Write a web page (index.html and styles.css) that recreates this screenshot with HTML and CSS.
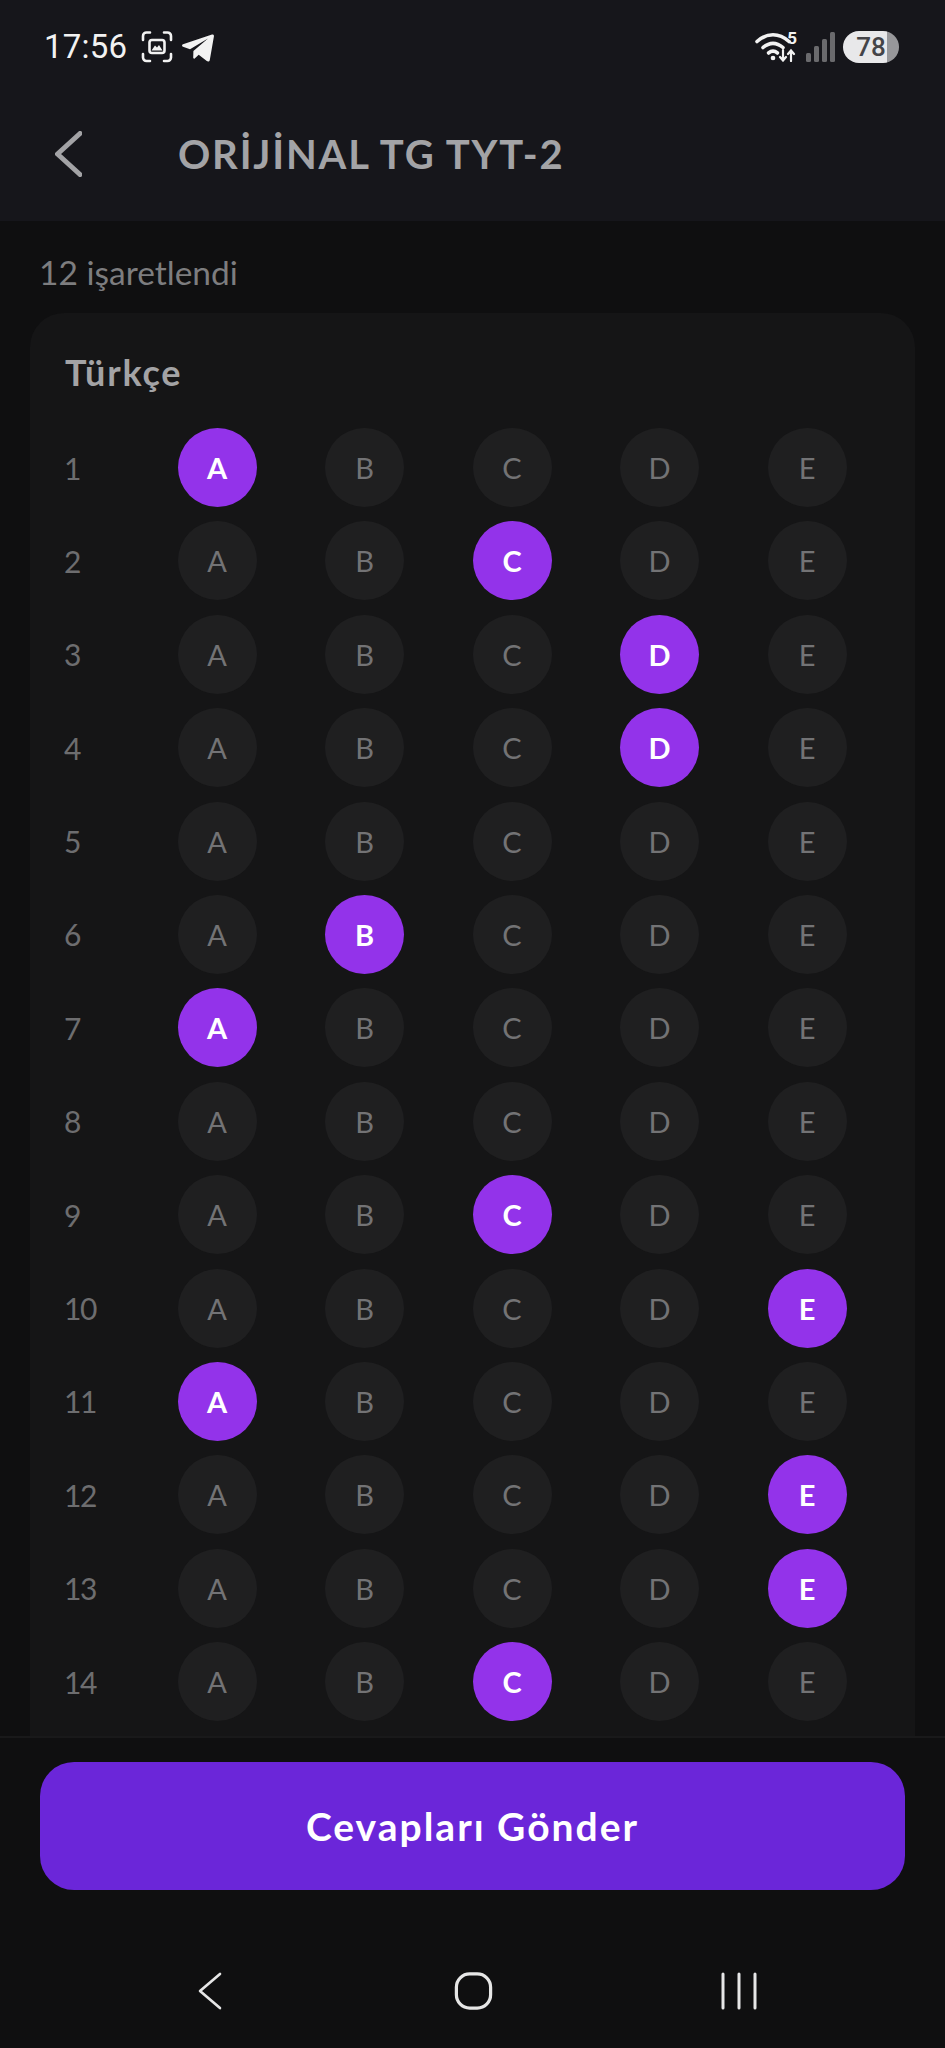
FILE: index.html
```html
<!DOCTYPE html>
<html lang="tr">
<head>
<meta charset="utf-8">
<title>ORİJİNAL TG TYT-2</title>
<link rel="stylesheet" href="styles.css">
</head>
<body>
<div class="screen">
  <div class="topbar">
    <div class="status">
      <div class="status-left">
        <span class="time">17:56</span>
        <svg class="ic-shot" viewBox="0 0 32 32" fill="none" stroke="#f2f2f2" stroke-width="2.6" stroke-linecap="round"><path d="M2 9V5a3.500 3.500 0 0 1 3.500-3.500H9M23 1.500h3.500A3.500 3.500 0 0 1 30 5v4M30 23v3.500a3.500 3.500 0 0 1-3.500 3.500H23M9 30H5.500A3.500 3.500 0 0 1 2 26.500V23"/><rect x="8.500" y="9" width="15" height="13" rx="2.500"/><path d="M10.500 19.500l3.500-5 2 2 2-2.500 3.500 5.500z" fill="#f2f2f2" stroke="none"/></svg>
        <svg class="ic-tg" viewBox="0 0 32 28"><path d="M30 .6c1.200-.4 2.200.5 1.900 1.800L27.800 26c-.3 1.500-1.800 2-3 1.100l-8.100-6.300-4 3.600c-.6.500-1.500.2-1.500-.6l.2-6.800L26 4.500 8 15.300 1 12.700c-1.300-.5-1.300-1.900 0-2.400z" fill="#f2f2f2"/></svg>
      </div>
      <div class="status-right">
        <div class="net">
          <svg class="ic-wifi" viewBox="0 0 42 30" fill="none" stroke="#f2f2f2" stroke-width="3.600" stroke-linecap="round"><path d="M2 9.500C12 .5 24 .5 34 9.500"/><path d="M8 15.500c6.500-5.500 13.500-5.500 20 0"/><path d="M13.500 21c3.300-2.600 5.700-2.600 9 0"/><circle cx="18" cy="26" r="1.600" fill="#f2f2f2" stroke-width="1.500"/><path d="M28 18v10M25 25l3 3.500 3-3.500M36 29V19M33 22l3-3.500 3 3.500" stroke-width="2.200"/></svg>
          <span class="net-five">5</span>
        </div>
        <svg class="ic-signal" viewBox="0 0 29 30" fill="#6a6a6d"><rect x="0" y="21" width="5" height="9" rx="1.500"/><rect x="8" y="14" width="5" height="16" rx="1.500"/><rect x="16" y="7" width="5" height="23" rx="1.500"/><rect x="24" y="0" width="5" height="30" rx="1.500"/></svg>
        <span class="battery">78</span>
      </div>
    </div>
    <header class="appbar">
      <svg class="ic-back" viewBox="0 0 27 46" fill="none" stroke="#a3a3a6" stroke-width="5" stroke-linecap="round" stroke-linejoin="round"><path d="M25 2.500L2.500 23 25 43.500"/></svg>
      <h1 class="title">ORİJİNAL TG TYT-2</h1>
    </header>
  </div>

  <main class="content">
    <p class="count">12 işaretlendi</p>
    <section class="card">
      <h2 class="card-title">Türkçe</h2>
      <div class="rows">
        <div class="row"><span class="num">1</span><span class="opt on">A</span><span class="opt">B</span><span class="opt">C</span><span class="opt">D</span><span class="opt">E</span></div>
        <div class="row"><span class="num">2</span><span class="opt">A</span><span class="opt">B</span><span class="opt on">C</span><span class="opt">D</span><span class="opt">E</span></div>
        <div class="row"><span class="num">3</span><span class="opt">A</span><span class="opt">B</span><span class="opt">C</span><span class="opt on">D</span><span class="opt">E</span></div>
        <div class="row"><span class="num">4</span><span class="opt">A</span><span class="opt">B</span><span class="opt">C</span><span class="opt on">D</span><span class="opt">E</span></div>
        <div class="row"><span class="num">5</span><span class="opt">A</span><span class="opt">B</span><span class="opt">C</span><span class="opt">D</span><span class="opt">E</span></div>
        <div class="row"><span class="num">6</span><span class="opt">A</span><span class="opt on">B</span><span class="opt">C</span><span class="opt">D</span><span class="opt">E</span></div>
        <div class="row"><span class="num">7</span><span class="opt on">A</span><span class="opt">B</span><span class="opt">C</span><span class="opt">D</span><span class="opt">E</span></div>
        <div class="row"><span class="num">8</span><span class="opt">A</span><span class="opt">B</span><span class="opt">C</span><span class="opt">D</span><span class="opt">E</span></div>
        <div class="row"><span class="num">9</span><span class="opt">A</span><span class="opt">B</span><span class="opt on">C</span><span class="opt">D</span><span class="opt">E</span></div>
        <div class="row"><span class="num">10</span><span class="opt">A</span><span class="opt">B</span><span class="opt">C</span><span class="opt">D</span><span class="opt on">E</span></div>
        <div class="row"><span class="num">11</span><span class="opt on">A</span><span class="opt">B</span><span class="opt">C</span><span class="opt">D</span><span class="opt">E</span></div>
        <div class="row"><span class="num">12</span><span class="opt">A</span><span class="opt">B</span><span class="opt">C</span><span class="opt">D</span><span class="opt on">E</span></div>
        <div class="row"><span class="num">13</span><span class="opt">A</span><span class="opt">B</span><span class="opt">C</span><span class="opt">D</span><span class="opt on">E</span></div>
        <div class="row"><span class="num">14</span><span class="opt">A</span><span class="opt">B</span><span class="opt on">C</span><span class="opt">D</span><span class="opt">E</span></div>
      </div>
    </section>
  </main>

  <footer class="footer">
    <button class="submit">Cevapları Gönder</button>
    <nav class="navbar">
      <svg class="nav-back" viewBox="0 0 25 40" fill="none" stroke="#e6e6e6" stroke-width="2.800" stroke-linecap="round" stroke-linejoin="round"><path d="M23 2L2 20l21 18"/></svg>
      <svg class="nav-home" viewBox="0 0 40 40" fill="none" stroke="#e6e6e6" stroke-width="3.400"><rect x="2" y="2" width="36" height="36" rx="14"/></svg>
      <svg class="nav-recent" viewBox="0 0 36 38" fill="none" stroke="#e6e6e6" stroke-width="3" stroke-linecap="round"><path d="M2 2v34M18 2v34M34 2v34"/></svg>
    </nav>
  </footer>
</div>
</body>
</html>
```
FILE: styles.css
```css
* { box-sizing: border-box; }
html, body { margin: 0; padding: 0; background: #0f0f10; }
body { font-family: "Lato", "Noto Sans", sans-serif; }

.screen {
  width: 945px;
  height: 2048px;
  display: flex;
  flex-direction: column;
  overflow: hidden;
  background: #0f0f10;
}

/* top */
.topbar { flex: 0 0 221px; background: #16161b; }
.status {
  height: 92px;
  padding: 31px 46px 0 44px;
  display: flex;
  justify-content: space-between;
  align-items: flex-start;
}
.status-left { display: flex; align-items: center; height: 32px; }
.time {
  font-family: "Roboto", sans-serif;
  font-size: 33px;
  line-height: 32px;
  color: #f2f2f2;
  width: 97px;
  letter-spacing: 0.2px;
}
.ic-shot { width: 32px; height: 32px; }
.ic-tg { width: 32px; height: 28px; margin-left: 9px; margin-top: 2px; }

.status-right { display: flex; align-items: center; height: 32px; }
.net { position: relative; width: 42px; height: 30px; }
.ic-wifi { width: 42px; height: 30px; display: block; }
.net-five {
  position: absolute;
  right: 0;
  top: -2px;
  font-family: "Roboto", sans-serif;
  font-size: 17px;
  line-height: 16px;
  font-weight: 700;
  color: #f2f2f2;
}
.ic-signal { width: 29px; height: 30px; margin-left: 9px; }
.battery {
  width: 56px;
  height: 32px;
  margin-left: 8px;
  border-radius: 16px;
  background: linear-gradient(90deg, #e8e8ea 0, #e8e8ea 44px, #97979a 44px);
  color: #444448;
  font-family: "Roboto", sans-serif;
  font-size: 26px;
  font-weight: 500;
  line-height: 32px;
  text-align: center;
}

.appbar {
  height: 129px;
  padding: 0 0 6px 55px;
  display: flex;
  align-items: center;
}
.ic-back { width: 27px; height: 46px; flex: none; }
.title {
  margin: 0 0 0 96px;
  font-size: 40px;
  line-height: 46px;
  font-weight: 700;
  color: #a3a3a6;
  letter-spacing: 1.8px;
  white-space: nowrap;
}

/* content */
.content { flex: 1 1 0; min-height: 0; overflow: hidden; }
.count {
  margin: 0;
  height: 92px;
  padding: 32px 0 0 39px;
  font-size: 33.500px;
  line-height: 38px;
  color: #7d7d7f;
}
.card {
  margin: 0 30px;
  padding: 38px 0 0 35px;
  background: #151516;
  border-radius: 34px 34px 0 0;
  min-height: 1500px;
}
.card-title {
  margin: 0;
  font-size: 36px;
  line-height: 42px;
  font-weight: 700;
  letter-spacing: 1.800px;
  color: #a3a3a5;
}
.rows { margin-top: 35px; display: flex; flex-direction: column; gap: 14.4px; }
.row { display: flex; align-items: center; height: 79px; }
.num {
  flex: 0 0 112.500px;
  font-size: 30px;
  letter-spacing: -1.5px;
  text-indent: -1px;
  color: #6d6d6f;
}
.opt {
  flex: 0 0 79px;
  height: 79px;
  margin-right: 68.500px;
  border-radius: 50%;
  background: #1f1f20;
  color: #737375;
  font-size: 29px;
  display: flex;
  align-items: center;
  justify-content: center;
}
.opt.on {
  background: #9333ea;
  color: #fff;
  font-weight: 700;
}

/* footer */
.footer {
  flex: 0 0 312px;
  background: #0f0f10;
  border-top: 2px solid #19191a;
  padding: 24px 40px 0;
  position: relative;
}
.submit {
  display: block;
  width: 865px;
  height: 128px;
  border: 0;
  border-radius: 34px;
  background: #6b26d9;
  color: #fff;
  font-family: inherit;
  font-size: 39px;
  font-weight: 700;
  letter-spacing: 2px;
  padding: 0;
}
.navbar {
  height: 38px;
  margin-top: 82px;
  padding-left: 158px;
  display: flex;
  align-items: center;
}
.nav-back { width: 24px; height: 38px; flex: none; }
.nav-home { width: 39px; height: 38px; flex: none; margin-left: 232px; }
.nav-recent { width: 36px; height: 38px; flex: none; margin-left: 228px; }
```
